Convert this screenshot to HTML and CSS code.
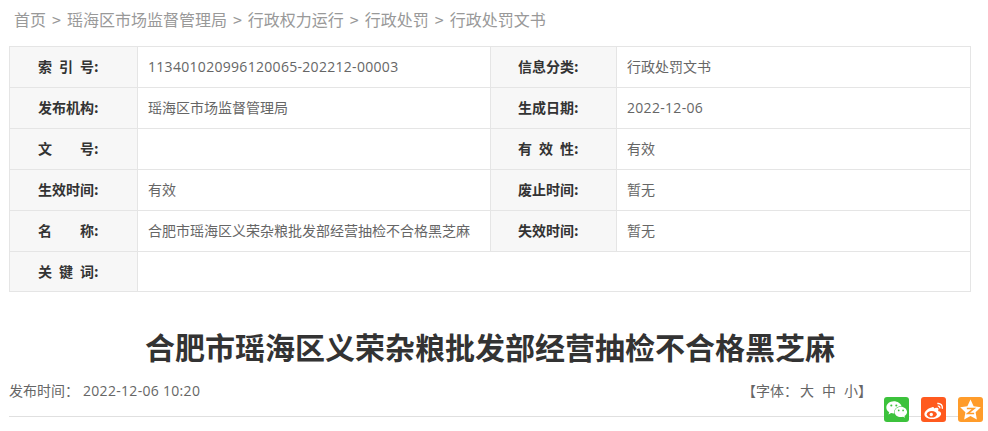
FILE: index.html
```html
<!DOCTYPE html>
<html lang="zh-CN">
<head>
<meta charset="utf-8">
<title>行政处罚文书</title>
<link rel="stylesheet" href="styles.css">
</head>
<body>
<nav class="crumbs">
  <a>首页</a><span class="sep">&gt;</span><a>瑶海区市场监督管理局</a><span class="sep">&gt;</span><a>行政权力运行</a><span class="sep">&gt;</span><a>行政处罚</a><span class="sep">&gt;</span><a>行政处罚文书</a>
</nav>
<table class="meta">
  <colgroup><col class="c1"><col class="c2"><col class="c3"><col class="c4"></colgroup>
  <tr><th>索&ensp;引&ensp;号:</th><td class="num">113401020996120065-202212-00003</td><th>信息分类:</th><td>行政处罚文书</td></tr>
  <tr><th>发布机构:</th><td>瑶海区市场监督管理局</td><th>生成日期:</th><td class="num">2022-12-06</td></tr>
  <tr><th>文&emsp;&emsp;号:</th><td></td><th>有&ensp;效&ensp;性:</th><td>有效</td></tr>
  <tr><th>生效时间:</th><td>有效</td><th>废止时间:</th><td>暂无</td></tr>
  <tr><th>名&emsp;&emsp;称:</th><td>合肥市瑶海区义荣杂粮批发部经营抽检不合格黑芝麻</td><th>失效时间:</th><td>暂无</td></tr>
  <tr class="last"><th>关&ensp;键&ensp;词:</th><td colspan="3"></td></tr>
</table>
<h1 class="title">合肥市瑶海区义荣杂粮批发部经营抽检不合格黑芝麻</h1>
<div class="info">
  <div class="date"><span class="date-label">发布时间：</span><span class="num">2022-12-06 10:20</span></div>
  <div class="size">【字体：<a>大</a><a>中</a><a>小</a>】</div>
</div>
<div class="share">
  <a class="btn wx"><svg viewBox="0 0 24 24" width="23" height="23"><path fill="#fff" d="M9.200 3.400C4.900 3.400 1.400 6.300 1.400 9.800c0 2 1.100 3.800 3 5l-.8 2.300 2.800-1.400c.9.300 1.800.4 2.800.4h.7a5.500 5.500 0 0 1-.2-1.600c0-3.400 3.100-6 6.900-6h.7C16.500 5.700 13.100 3.400 9.200 3.400z"/><path fill="#fff" d="M23 14.500c0-3-3-5.400-6.400-5.400-3.700 0-6.500 2.400-6.500 5.400s2.800 5.400 6.500 5.400c.8 0 1.500-.2 2.200-.4l2.100 1.200-.6-1.900c1.700-1.100 2.700-2.600 2.700-4.300z"/><circle cx="6.600" cy="7.800" r="1.100" fill="#3cc23c"/><circle cx="11.800" cy="7.800" r="1.100" fill="#3cc23c"/><circle cx="14.300" cy="13" r=".9" fill="#3cc23c"/><circle cx="18.900" cy="13" r=".9" fill="#3cc23c"/></svg></a>
  <a class="btn wb"><svg viewBox="0 0 24 24" width="24" height="24"><path fill="#fff" d="M10.200 9.300c-4 .9-7.800 4.200-7.800 7 0 2.700 3.500 4.800 8 4.800 5 0 8.700-2.900 8.700-5.300 0-1.500-1.300-2.200-2.300-2.500-.5-.1-.8-.2-.6-.8.500-1.300.4-2.100-.2-2.500-1.200-.7-3.200 0-3.900.3-.2-.1.100-1.900-2-1z"/><ellipse cx="9.800" cy="16.300" rx="5" ry="3.300" fill="#ff5a1f"/><circle cx="9.300" cy="16.500" r="1.700" fill="#fff"/><path fill="none" stroke="#fff" stroke-width="1.500" d="M15.300 5.500c3.300-.6 5.800 2 5 5.300"/><path fill="none" stroke="#fff" stroke-width="1.300" d="M15.800 8.200c1.500-.3 2.300.9 2 2.100"/></svg></a>
  <a class="btn qz"><svg viewBox="0 0 24 24" width="25" height="25"><path fill="#fff" d="M12 2.500l3 6.300 6.900 1-5 4.800 1.200 6.900-6.100-3.300-6.100 3.300 1.200-6.900-5-4.800 6.900-1z"/><path fill="none" stroke="#ff9c2a" stroke-width="1.600" d="M8.500 11h6.800l-5.800 4.800h6"/></svg></a>
</div>
</body>
</html>
```
FILE: styles.css
```css
* { box-sizing: border-box; }
html, body { margin: 0; padding: 0; }
body {
  width: 988px;
  height: 431px;
  overflow: hidden;
  position: relative;
  background: #fff;
  color: #666;
  font-family: "Noto Sans CJK SC", "Noto Sans", sans-serif;
  font-size: 14px;
}
.crumbs {
  height: 46px;
  padding: 6px 0 0 14px;
  font-size: 16px;
  line-height: 26px;
  color: #999;
  white-space: nowrap;
}
.sep { margin: 0 6px; font-size: 16px; }
.meta {
  width: 962px;
  margin-left: 9px;
  border-collapse: collapse;
  table-layout: fixed;
}
.c1 { width: 128px; }
.c2 { width: 353px; }
.c3 { width: 126px; }
.meta th, .meta td {
  border: 1px solid #e5e5e5;
  height: 41px;
  padding: 0 10px 2px;
  line-height: 20px;
  font-size: 14px;
  white-space: nowrap;
}
.meta th {
  background: #f7f7f7;
  color: #333;
  font-weight: 700;
  text-align: left;
  padding-left: 28px;
}
.meta td + th { padding-left: 27px; }
.meta td { color: #666; }
.meta td.num { padding-bottom: 0; }
.meta .last th, .meta .last td { height: 40px; }
.num {
  font-family: "Open Sans", "Noto Sans CJK SC", sans-serif;
  letter-spacing: .3px;
}
.title {
  width: 980px;
  margin: 21px 0 0;
  text-align: center;
  font-size: 30px;
  line-height: 66px;
  font-weight: 700;
  color: #333;
}
.info {
  margin: 0 9px;
  width: 970px;
  height: 38px;
  border-bottom: 1px solid #e0e0e0;
  display: flex;
  justify-content: space-between;
  line-height: 22px;
}
.date-label { margin-right: 4px; }
.size { padding-right: 107px; }
.size a { margin-left: 8px; }
.size a:first-of-type { margin-left: 2px; }
.share {
  position: absolute;
  right: 5px;
  top: 397px;
  display: flex;
  gap: 12px;
}
.btn {
  width: 25px;
  height: 25px;
  border-radius: 3px;
  display: flex;
  align-items: center;
  justify-content: center;
}
.wx { background: #3cc23c; }
.wb { background: #ff5a1f; }
.qz { background: #ff9c2a; }
```
